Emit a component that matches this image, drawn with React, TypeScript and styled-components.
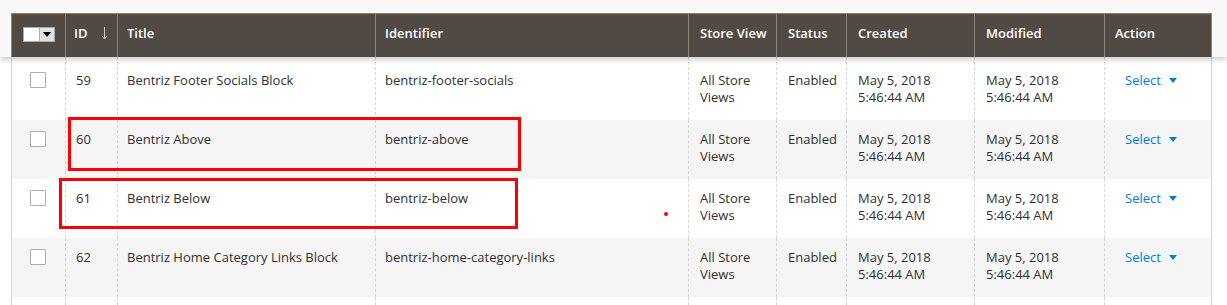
import React from "react";
import styled, { createGlobalStyle } from "styled-components";

const GlobalStyle = createGlobalStyle`
  html, body { margin: 0; padding: 0; background: #ffffff; }
  body { font-family: "Open Sans", "Liberation Sans", sans-serif; font-size: 13px; color: #303030; }
  * { box-sizing: border-box; }
`;

const COLS = "54px 52px 258px 313px 88px 70px 128px 130px 108px";

const Page = styled.div`
  width: 1227px;
  overflow: hidden;
`;

const HeaderBar = styled.div`
  position: relative;
  z-index: 2;
  background: #f8f8f8;
  padding: 13px 0 0 11px;
  box-shadow: 0 3px 5px 0 rgba(0, 0, 0, 0.18);
`;

const HeaderGrid = styled.div`
  display: grid;
  grid-template-columns: ${COLS};
  width: 1201px;
  height: 44px;
  background: #514943;
  border-top: 1px solid #8a837f;
`;

const Th = styled.div<{ $pad?: number; $last?: boolean; $lift?: number }>`
  display: flex;
  align-items: center;
  padding-left: ${(p) => p.$pad ?? 11}px;
  padding-bottom: ${(p) => p.$lift ?? 5}px;
  border-left: 1px solid #8a837f;
  border-right: ${(p) => (p.$last ? "1px solid #8a837f" : "none")};
  color: #ffffff;
  font-weight: 600;
  font-size: 13px;
  white-space: nowrap;
`;

const MultiCheck = styled.div`
  display: flex;
  height: 15px;
  border: 1px solid #adadad;
  background: #ffffff;
`;

const MultiBox = styled.span`
  width: 15px;
  height: 13px;
  background: #ffffff;
`;

const MultiToggle = styled.span`
  display: flex;
  align-items: center;
  justify-content: center;
  width: 15px;
  height: 13px;
  background: #e3e3e3;
  border-left: 1px solid #adadad;
  &::after {
    content: "";
    border-left: 4px solid transparent;
    border-right: 4px solid transparent;
    border-top: 5px solid #000000;
  }
`;

const SortArrow = styled.svg`
  margin-left: 13px;
  margin-top: 1px;
`;

const Body = styled.div`
  position: relative;
  z-index: 1;
  padding-left: 11px;
`;

const Row = styled.div<{ $alt?: boolean; $first?: boolean }>`
  display: grid;
  grid-template-columns: ${COLS};
  width: 1201px;
  height: ${(p) => (p.$first ? 63 : 59)}px;
  background: ${(p) => (p.$alt ? "#f5f5f5" : "#ffffff")};
`;

const Td = styled.div<{ $pad?: number; $kind?: "first" | "last" | "mid"; $top: number }>`
  padding: ${(p) => p.$top}px 8px 0 ${(p) => p.$pad ?? 11}px;
  line-height: 17.4px;
  font-size: 13px;
  color: #303030;
  border-left: ${(p) => (p.$kind === "first" ? "1px solid #d6d6d6" : "1px dashed #d6d6d6")};
  border-right: ${(p) => (p.$kind === "last" ? "1px solid #d6d6d6" : "none")};
`;

const CheckBox = styled.span`
  display: block;
  width: 16px;
  height: 16px;
  background: #ffffff;
  border: 1px solid #adadad;
  border-radius: 1px;
`;

const SelectLink = styled.span`
  display: inline-flex;
  align-items: center;
  color: #007bdb;
  &::after {
    content: "";
    margin-left: 8px;
    margin-top: -1px;
    border-left: 4px solid transparent;
    border-right: 4px solid transparent;
    border-top: 5px solid #007bdb;
  }
`;

const Callout = styled.div`
  position: absolute;
  border: 3px solid #ff0000;
  pointer-events: none;
`;

const Dot = styled.div`
  position: absolute;
  width: 4px;
  height: 4px;
  border-radius: 50%;
  background: #ff0000;
`;

type Item = { id: string; title: string; ident: string };

const items: Item[] = [
  { id: "59", title: "Bentriz Footer Socials Block", ident: "bentriz-footer-socials" },
  { id: "60", title: "Bentriz Above", ident: "bentriz-above" },
  { id: "61", title: "Bentriz Below", ident: "bentriz-below" },
  { id: "62", title: "Bentriz Home Category Links Block", ident: "bentriz-home-category-links" },
];

export default function App() {
  return (
    <Page>
      <GlobalStyle />
      <HeaderBar>
        <HeaderGrid>
          <Th $pad={11} $lift={2}>
            <MultiCheck>
              <MultiBox />
              <MultiToggle />
            </MultiCheck>
          </Th>
          <Th $pad={8}>
            ID
            <SortArrow width="7" height="13" viewBox="0 0 7 13">
              <line x1="3.5" y1="0" x2="3.5" y2="12" stroke="#c9c2bd" strokeWidth="1" />
              <polyline points="0.8,8.8 3.5,12 6.2,8.8" fill="none" stroke="#c9c2bd" strokeWidth="1" />
            </SortArrow>
          </Th>
          <Th $pad={9}>Title</Th>
          <Th $pad={9}>Identifier</Th>
          <Th>Store View</Th>
          <Th>Status</Th>
          <Th>Created</Th>
          <Th>Modified</Th>
          <Th $last $pad={10}>Action</Th>
        </HeaderGrid>
      </HeaderBar>
      <Body>
        {items.map((it, i) => {
          const top = i === 0 ? 15 : 11;
          return (
            <Row key={it.id} $alt={i % 2 === 1} $first={i === 0}>
              <Td $kind="first" $pad={18} $top={top}>
                <CheckBox />
              </Td>
              <Td $pad={10} $top={top}>{it.id}</Td>
              <Td $pad={9} $top={top}>{it.title}</Td>
              <Td $pad={9} $top={top}>{it.ident}</Td>
              <Td $top={top}>
                All Store
                <br />
                Views
              </Td>
              <Td $top={top}>Enabled</Td>
              <Td $top={top}>
                May 5, 2018
                <br />
                5:46:44 AM
              </Td>
              <Td $top={top}>
                May 5, 2018
                <br />
                5:46:44 AM
              </Td>
              <Td $kind="last" $pad={20} $top={top}>
                <SelectLink>Select</SelectLink>
              </Td>
            </Row>
          );
        })}
        <Row>
          <Td $kind="first" $top={10} />
          <Td $top={10} />
          <Td $top={10} />
          <Td $top={10} />
          <Td $top={10} />
          <Td $top={10} />
          <Td $top={10} />
          <Td $top={10} />
          <Td $kind="last" $top={10} />
        </Row>
        <Callout style={{ left: 68, top: 60, width: 453, height: 54 }} />
        <Callout style={{ left: 59, top: 121, width: 459, height: 51 }} />
        <Dot style={{ left: 664, top: 155 }} />
      </Body>
    </Page>
  );
}
